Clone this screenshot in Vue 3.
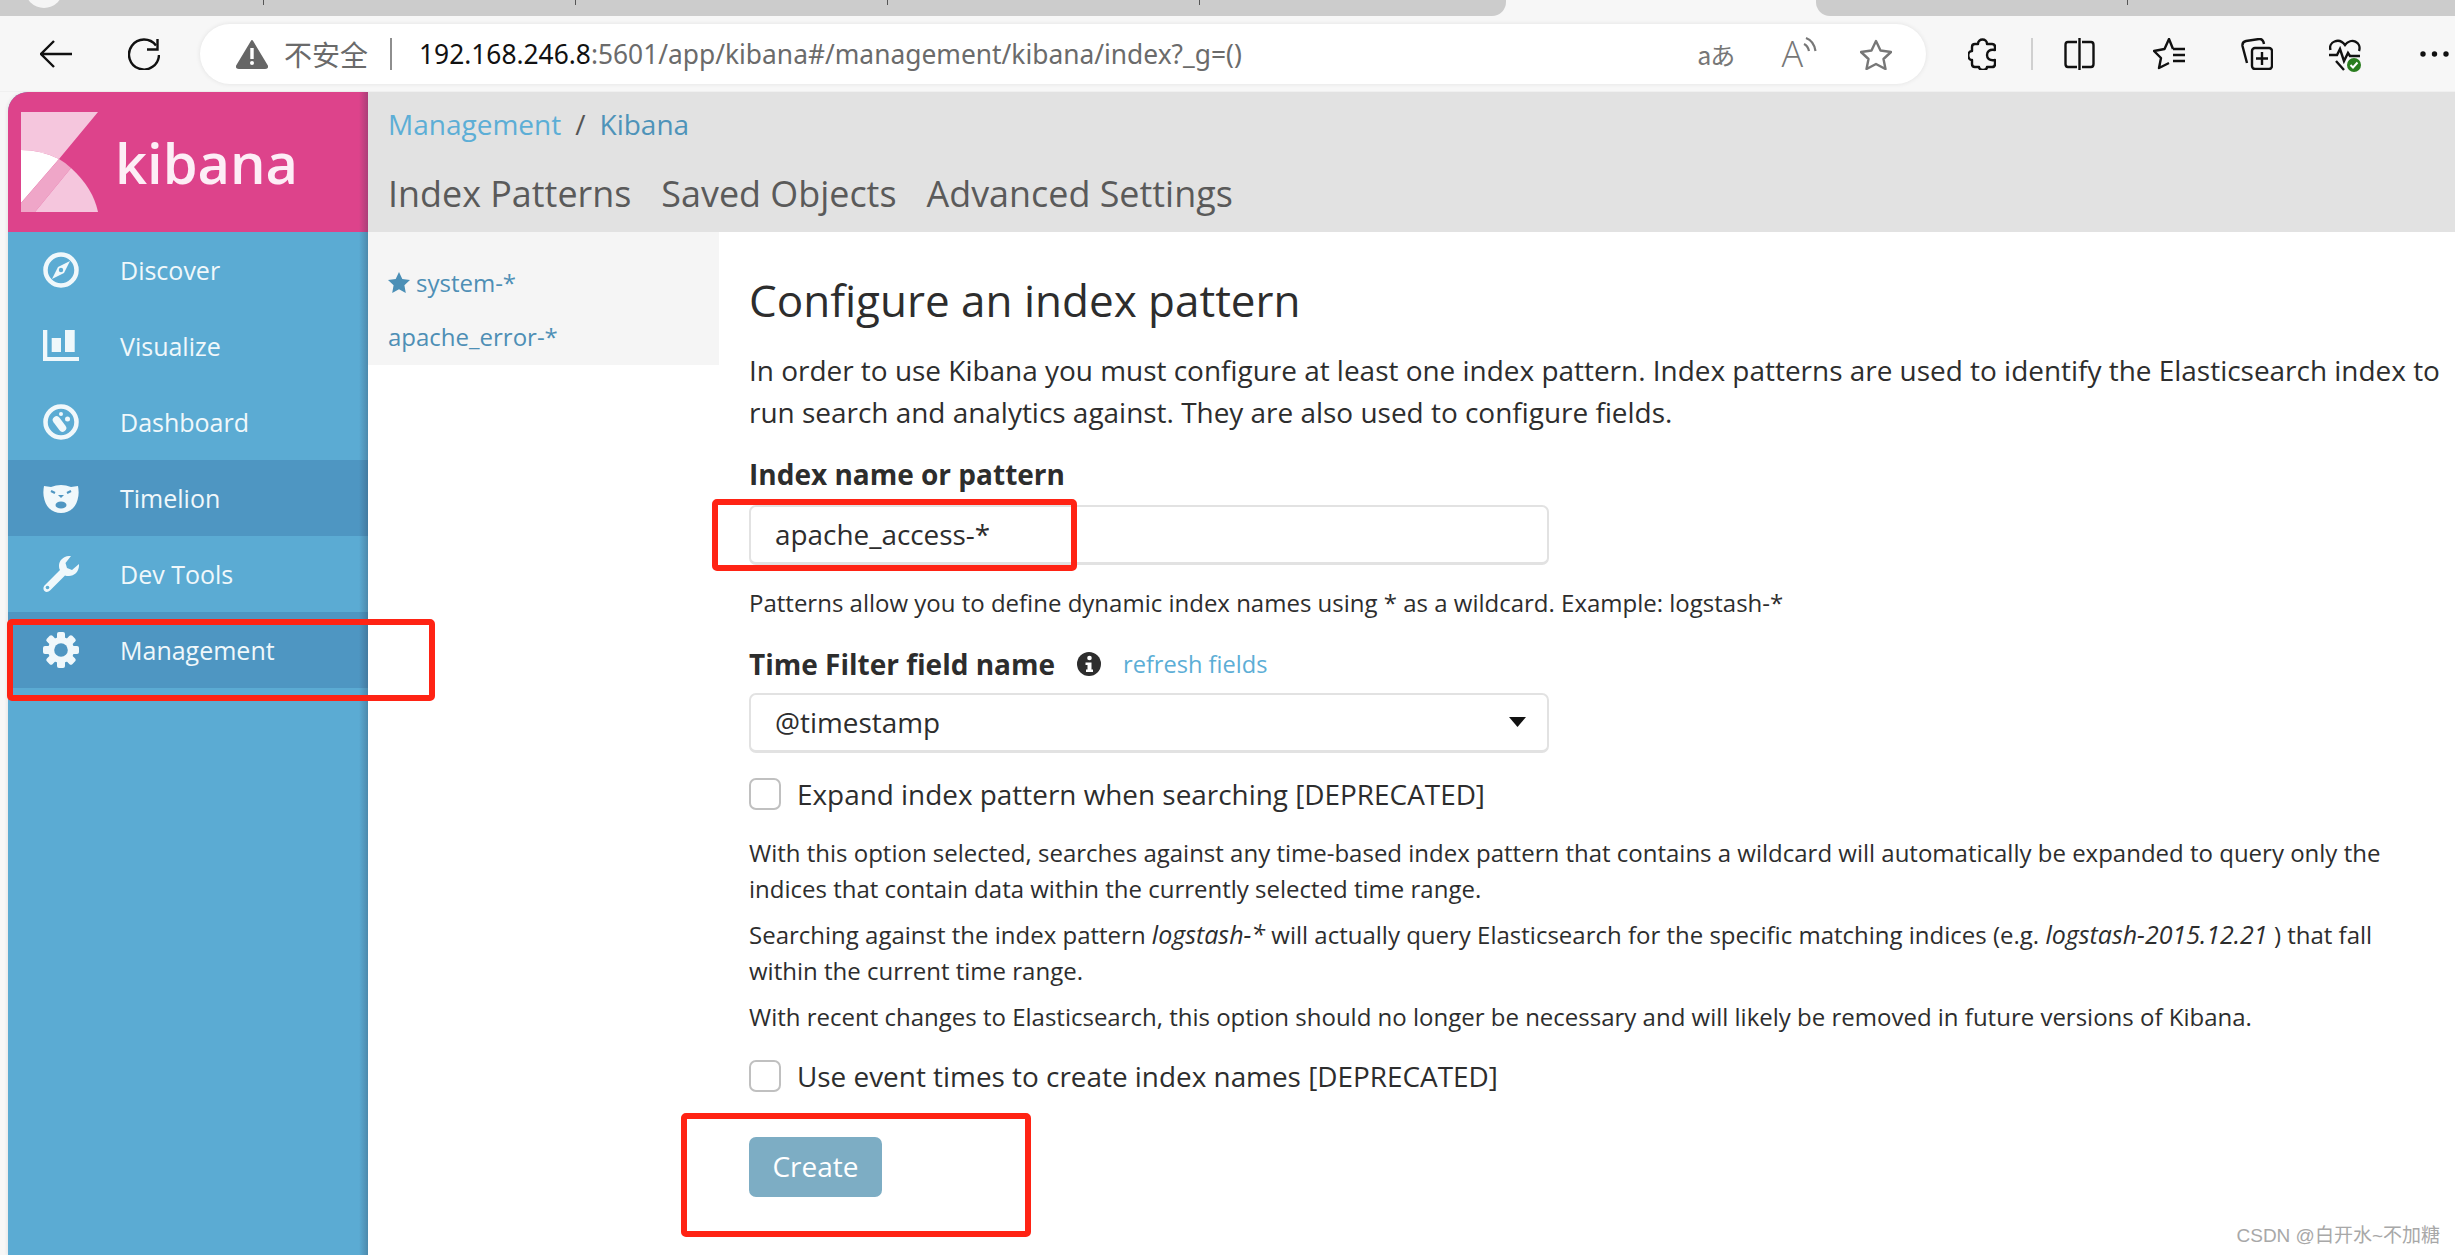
<script setup>
const gearAngles = [0, 45, 90, 135, 180, 225, 270, 315]
</script>

<template>
  <div class="page">
    <div class="tabstrip">
      <div class="tab-dark first">
        <span class="favicon"></span>
        <i class="tsep s1"></i><i class="tsep"></i><i class="tsep"></i><i class="tsep"></i>
      </div>
      <div class="tab-active"></div>
      <div class="tab-dark last"><i class="tsep s5"></i></div>
    </div>

    <div class="toolbar">
      <svg class="ic back" width="32" height="28" viewBox="0 0 32 28" fill="none" stroke="#111" stroke-width="2.4"><path d="M1 14H32M14 1L1 14L14 27"/></svg>
      <svg class="ic reload" width="32" height="32" viewBox="0 0 32 32" fill="none" stroke="#111" stroke-width="2.4"><path d="M28 7.5A15 15 0 1 0 31 17"/><path d="M29.5 1V11.5H19"/></svg>
      <div class="addr">
        <svg class="warn" width="32" height="30" viewBox="0 0 32 30"><path d="M16 2L31 27Q31.500 29 29 29H3Q0.500 29 1 27Z" fill="#666" stroke="#666" stroke-width="2" stroke-linejoin="round"/><rect x="14.300" y="9" width="3.400" height="11" fill="#fff"/><circle cx="16" cy="24" r="2" fill="#fff"/></svg>
        <span class="insecure">不安全</span>
        <i class="addr-sep"></i>
        <span class="url"><b>192.168.246.8</b>:5601/app/kibana#/management/kibana/index?_g=()</span>
        <span class="addr-right">
          <span class="translate">aあ</span>
          <span class="readaloud">A<svg width="14" height="18" viewBox="0 0 14 18" fill="none" stroke="#777" stroke-width="2.200"><path d="M1 8Q5 10 6 15M3 2Q11 5 12.500 15"/></svg></span>
          <svg class="fav" width="32" height="31" viewBox="0 0 32 31" fill="none" stroke="#777" stroke-width="2.400" stroke-linejoin="round"><path d="M16 2L20.500 11.500L31 13L23.500 20L25.500 30L16 25L6.500 30L8.500 20L1 13L11.500 11.500Z"/></svg>
        </span>
      </div>
      <svg class="ic puzzle" width="28" height="32" viewBox="0 0 28 32" fill="none" stroke="#111" stroke-width="2.400" stroke-linejoin="round"><path d="M10 6C10 0 19 0 19 6H24Q27 6 27 9V12C21 11 19 14 19 17C19 20 21 23 27 22V26Q27 29 24 29H19C19 33 11 33 11 29H7Q4 29 4 26V22C-1 22 -1 13 4 13V9Q4 6 7 6Z"/></svg>
      <i class="tool-sep"></i>
      <svg class="ic split" width="31" height="32" viewBox="0 0 31 32" fill="none" stroke="#111" stroke-width="2.400"><path d="M13 4H4Q1.500 4 1.500 7V26Q1.500 29 4 29H13M18 4H27Q29.500 4 29.500 7V26Q29.500 29 27 29H18M15.500 0V32"/></svg>
      <svg class="ic favlist" width="32" height="32" viewBox="0 0 32 32" fill="none" stroke="#111" stroke-width="2.400" stroke-linejoin="round"><path d="M20 11L16 1L11.500 11L1 13L8 20L6 30L16 25M20 11H32M20 17H32M20 23H32"/></svg>
      <svg class="ic coll" width="32" height="32" viewBox="0 0 32 32" fill="none" stroke="#111" stroke-width="2.400"><path d="M6 25L1.500 8Q1 4 5 3L18 1Q22 0.500 23 6"/><rect x="11" y="10" width="20" height="21" rx="3"/><path d="M21 14V27M15 20.500H27"/></svg>
      <svg class="ic heart" width="32" height="33" viewBox="0 0 32 33" fill="none" stroke="#111" stroke-width="2.400"><path d="M1.500 11C-1 3 10 -2 16 6C22 -2 33 3 30 12M0 16H8L11 10L15 22L19 14L21 17H31M7 22L15 31"/><circle cx="25" cy="26" r="7" fill="#2a7d1f" stroke="none"/><path d="M21.500 26L24 28.500L28.500 23.500" stroke="#fff" stroke-width="2"/></svg>
      <svg class="ic dots" width="29" height="6" viewBox="0 0 29 6" fill="#111"><circle cx="3" cy="3" r="2.700"/><circle cx="14.500" cy="3" r="2.700"/><circle cx="26" cy="3" r="2.700"/></svg>
    </div>

    <div class="main">
      <aside class="sidebar">
        <div class="logo">
          <svg class="logo-mark" width="77" height="100" viewBox="0 0 77 100">
            <path d="M0 0H77L38 47Q20 38 0 38Z" fill="#f5c6dd"/>
            <path d="M0 38Q20 38 38 47L0 91Z" fill="#fff"/>
            <path d="M0 91L38 47Q45 51 50 56L14 100H0Z" fill="#efa6c8"/>
            <path d="M50 56Q72 76 77 100H14Z" fill="#f5c6dd"/>
          </svg>
          <span class="logo-text">kibana</span>
        </div>
        <nav class="nav">
          <a class="nav-item">
            <span class="nav-icon"><svg width="36" height="36" viewBox="0 0 36 36"><circle cx="18" cy="18" r="15.500" fill="none" stroke="#f0f8fb" stroke-width="4.500"/><path d="M27 9L21 21L9 27L15 15Z" fill="#f0f8fb"/><circle cx="18" cy="18" r="2.200" fill="#5babd3"/></svg></span>
            <span>Discover</span>
          </a>
          <a class="nav-item">
            <span class="nav-icon"><svg width="36" height="32" viewBox="0 0 36 32" fill="#f0f8fb"><rect width="4.300" height="31"/><rect y="27" width="36" height="4"/><rect x="8.700" y="8" width="9.300" height="14"/><rect x="22" width="9.700" height="22"/></svg></span>
            <span>Visualize</span>
          </a>
          <a class="nav-item">
            <span class="nav-icon"><svg width="36" height="36" viewBox="0 0 36 36"><circle cx="18" cy="18" r="15.500" fill="none" stroke="#f0f8fb" stroke-width="4.500"/><path d="M13.500 16L19.500 24" stroke="#f0f8fb" stroke-width="7.500" stroke-linecap="round"/><circle cx="24.500" cy="15" r="2.500" fill="#f0f8fb"/><circle cx="18" cy="10" r="2" fill="#f0f8fb"/></svg></span>
            <span>Dashboard</span>
          </a>
          <a class="nav-item active">
            <span class="nav-icon"><svg width="36" height="29" viewBox="0 0 36 29"><path d="M1 2L8 3Q18 -1 28 3L35 2Q36.500 10 34.500 16C32 25 25 29 18 29C11 29 4 25 1.500 16Q-0.500 10 1 2Z" fill="#f0f8fb"/><path d="M8 7L12 9M28 7L24 9" stroke="#4e96c2" stroke-width="2.200"/><path d="M15 11H21L18 14Z" fill="#4e96c2"/><ellipse cx="18" cy="21" rx="5.500" ry="3.600" fill="#4e96c2"/></svg></span>
            <span>Timelion</span>
          </a>
          <a class="nav-item">
            <span class="nav-icon"><svg width="36" height="36" viewBox="0 0 36 36"><path d="M28 0C21 -0.500 16 4 16 10C16 12 16.500 13 17 14L2 29C0 31 0 33.500 1.500 35C3 36.500 5.500 36 7 34.500L22 19.500C23 20 24 20 26 20C32 20 36.500 15 36 8L29 14L24 12L22.500 7Z" fill="#f0f8fb"/><circle cx="4.500" cy="31.500" r="1.800" fill="#5babd3"/></svg></span>
            <span>Dev Tools</span>
          </a>
          <a class="nav-item active">
            <span class="nav-icon"><svg width="36" height="36" viewBox="0 0 36 36"><g fill="#f0f8fb"><rect v-for="a in gearAngles" :key="a" x="14" y="0" width="8" height="9" rx="2" :transform="`rotate(${a} 18 18)`"/><circle cx="18" cy="18" r="13"/></g><circle cx="18" cy="18" r="6.800" fill="#4e96c2"/></svg></span>
            <span>Management</span>
          </a>
        </nav>
      </aside>

      <div class="workspace">
        <header class="topbar">
          <div class="crumbs"><a class="c1">Management</a><span class="slash">/</span><a class="c2">Kibana</a></div>
          <div class="tabs"><span>Index Patterns</span><span>Saved Objects</span><span>Advanced Settings</span></div>
        </header>
        <div class="body">
          <div class="subnav">
            <div class="sub-item first"><svg width="22" height="21" viewBox="0 0 22 21"><path d="M11 0L14.300 7L22 8L16.400 13.200L17.800 21L11 17.200L4.200 21L5.600 13.200L0 8L7.700 7Z" fill="#4b8fb6"/></svg><span>system-*</span></div>
            <div class="sub-item second">apache_error-*</div>
          </div>
          <main class="form">
            <h1>Configure an index pattern</h1>
            <p class="intro">In order to use Kibana you must configure at least one index pattern. Index patterns are used to identify the Elasticsearch index to run search and analytics against. They are also used to configure fields.</p>
            <div class="label l1">Index name or pattern</div>
            <div class="field">apache_access-*</div>
            <p class="help h1b">Patterns allow you to define dynamic index names using * as a wildcard. Example: logstash-*</p>
            <div class="label l2">
              <span>Time Filter field name</span>
              <svg class="info" width="24" height="24" viewBox="0 0 24 24"><circle cx="12" cy="12" r="12" fill="#2d2d2d"/><circle cx="12.500" cy="6" r="2.300" fill="#fff"/><path d="M8.500 10.500H14.500V17.500H16V20H9V17.500H10.500V13H8.500Z" fill="#fff"/></svg>
              <a class="refresh">refresh fields</a>
            </div>
            <div class="field select">@timestamp<svg width="17" height="10" viewBox="0 0 17 10"><path d="M0 0H17L8.500 10Z" fill="#111"/></svg></div>
            <label class="check c-a"><i class="box"></i><span>Expand index pattern when searching [DEPRECATED]</span></label>
            <p class="help p1">With this option selected, searches against any time-based index pattern that contains a wildcard will automatically be expanded to query only the indices that contain data within the currently selected time range.</p>
            <p class="help p2">Searching against the index pattern <em>logstash-*</em> will actually query Elasticsearch for the specific matching indices (e.g. <em>logstash-2015.12.21</em> ) that fall within the current time range.</p>
            <p class="help p3">With recent changes to Elasticsearch, this option should no longer be necessary and will likely be removed in future versions of Kibana.</p>
            <label class="check c-b"><i class="box"></i><span>Use event times to create index names [DEPRECATED]</span></label>
            <button class="create" type="button">Create</button>
          </main>
        </div>
      </div>
    </div>

    <div class="mark m-a"></div>
    <div class="mark m-b"></div>
    <div class="mark m-c"></div>
    <div class="watermark">CSDN @白开水~不加糖</div>
  </div>
</template>

<style scoped>
.page { position: relative; width: 2455px; height: 1255px; overflow: hidden; background: #fff; font-family: "Open Sans", "Noto Sans", sans-serif; color: #2d2d2d; }
.tabstrip { display: flex; height: 16px; background: #f7f7f7; }
.tab-dark { position: relative; background: #cccccc; height: 16px; }
.tab-dark.first { width: 1506px; border-radius: 0 0 14px 0; display: flex; }
.tab-active { width: 310px; }
.tab-dark.last { flex: 1; border-radius: 0 0 0 14px; display: flex; }
.favicon { position: absolute; left: 25px; top: -30px; width: 38px; height: 38px; border-radius: 50%; background: #f5f5f5; }
.tsep { width: 1px; height: 5px; background: #555; margin-left: 311px; }
.tsep.s1 { margin-left: 263px; }
.tsep.s5 { margin-left: 311px; }
.toolbar { box-sizing: border-box; height: 76px; padding-top: 1px; border-bottom: 1px solid #f0f0f0; background: #f7f7f7; display: flex; align-items: center; }
.ic { flex: none; display: block; }
.back { margin-left: 40px; }
.reload { margin-left: 56px; }
.addr { width: 1726px; height: 60px; margin-left: 40px; border-radius: 30px; background: #fff; box-shadow: 0 0 5px rgba(0,0,0,.09); display: flex; align-items: center; flex: none; }
.warn { margin-left: 36px; flex: none; }
.insecure { margin-left: 16px; font: 28px "Noto Sans CJK SC", sans-serif; color: #6a6a6a; }
.addr-sep { width: 2px; height: 32px; background: #8e8e8e; margin-left: 22px; }
.url { margin-left: 27px; font: 26.35px "Noto Sans", sans-serif; color: #6b6b6b; white-space: nowrap; }
.url b { font-weight: 400; color: #111; }
.addr-right { margin-left: auto; display: flex; align-items: center; margin-right: 34px; }
.translate { font: 25px "Noto Sans CJK JP", sans-serif; color: #777; letter-spacing: -1px; }
.readaloud { margin-left: 47px; display: flex; align-items: flex-start; font: 300 36px "Open Sans", sans-serif; color: #777; height: 36px; line-height: 36px; }
.fav { margin-left: 43px; }
.puzzle { margin-left: 42px; }
.tool-sep { width: 2px; height: 32px; background: #d0d0d0; margin-left: 35px; flex: none; }
.split { margin-left: 31px; }
.favlist { margin-left: 58px; }
.coll { margin-left: 56px; }
.heart { margin-left: 56px; margin-top: 3px; }
.dots { margin-left: 59px; }

.main { display: flex; height: 1163px; padding-left: 8px; background: #f7f7f7; }
.sidebar { position: relative; width: 360px; flex: none; background: #5babd3; border-top-left-radius: 20px; overflow: hidden; box-shadow: -2px 0 3px rgba(0,0,0,.05); }
.sidebar::after { content: ""; position: absolute; top: 0; right: 0; bottom: 0; width: 9px; background: linear-gradient(90deg, rgba(40,50,70,0), rgba(40,50,70,.28)); }
.logo { height: 140px; background: #dd438b; display: flex; align-items: center; }
.logo-mark { margin-left: 13px; flex: none; }
.logo-text { margin-left: 17px; font: 600 56px/1 "Open Sans", sans-serif; color: #fdeef6; }
.nav-item { height: 76px; display: flex; align-items: center; color: #f0f8fb; font-size: 25px; }
.nav-item.active { background: #4e96c2; }
.nav-icon { width: 36px; margin-left: 35px; margin-right: 41px; display: flex; justify-content: center; }
.nav-icon svg { display: block; }

.workspace { flex: 1; display: flex; flex-direction: column; background: #fff; }
.topbar { height: 140px; background: #e2e2e2; padding-left: 20px; box-sizing: border-box; }
.crumbs { display: flex; align-items: center; font-size: 28px; height: 40px; margin-top: 12px; }
.c1 { color: #5caed6; }
.slash { color: #555; margin: 0 14px; }
.c2 { color: #4e93b9; }
.tabs { display: flex; gap: 30px; font-size: 35.9px; color: #5a5a5a; height: 50px; line-height: 50px; margin-top: 25px; }
.body { display: flex; flex: 1; }
.subnav { width: 351px; height: 133px; flex: none; background: #f5f5f5; padding-left: 20px; box-sizing: border-box; color: #4e8fb5; font-size: 24px; }
.sub-item { display: flex; align-items: center; height: 40px; }
.sub-item.first { margin-top: 30px; gap: 6px; }
.sub-item.second { margin-top: 14px; }
.form { flex: 1; padding: 43px 8px 0 30px; min-width: 0; }
h1 { margin: 0; font-size: 44px; font-weight: 400; line-height: 50px; }
.intro { margin: 24px 0 0; font-size: 27.95px; line-height: 42px; }
.label { font-size: 28px; font-weight: 700; line-height: 40px; height: 40px; }
.l1 { margin-top: 21px; }
.field { box-sizing: border-box; width: 800px; height: 60px; margin-top: 11px; border: 2px solid #e2e2e2; border-bottom-width: 3px; border-radius: 7px; background: #fff; padding: 0 0 2px 24px; font-size: 27.9px; display: flex; align-items: center; }
.help { margin: 0; font-size: 24px; line-height: 36px; }
.help em { font-size: 25px; line-height: 1; }
.h1b { margin-top: 20px; }
.l2 { margin-top: 23px; display: flex; align-items: center; }
.info { margin-left: 22px; flex: none; }
.refresh { margin-left: 22px; font-size: 23.6px; font-weight: 400; color: #5caed6; }
.select { margin-top: 9px; justify-content: space-between; padding-right: 21px; }
.check { display: flex; align-items: center; height: 32px; font-size: 27.9px; }
.box { box-sizing: border-box; width: 32px; height: 32px; border: 2.5px solid #c0c0c0; border-radius: 7px; background: #fff; margin-right: 16px; flex: none; }
.c-a { margin-top: 25px; }
.p1 { margin-top: 25px; }
.p2 { margin-top: 10px; padding-right: 40px; }
.p3 { margin-top: 10px; }
.c-b { margin-top: 25px; }
.create { display: block; width: 133px; height: 60px; margin-top: 45px; border: 0; border-radius: 7px; background: #7dadc4; color: #fff; font: 28px "Open Sans", sans-serif; padding: 0 0 3px; }

.mark { position: absolute; box-sizing: border-box; border: 6px solid #ff2314; border-radius: 5px; }
.m-a { left: 7px; top: 619px; width: 428px; height: 82px; }
.m-b { left: 712px; top: 499px; width: 365px; height: 72px; }
.m-c { left: 681px; top: 1113px; width: 350px; height: 124px; }
.watermark { position: absolute; right: 15px; top: 1225px; font: 19px/22px "Liberation Sans", "Noto Sans CJK SC", sans-serif; color: #a8a8a8; }
</style>

<style>
body { margin: 0; background: #fff; }
</style>
